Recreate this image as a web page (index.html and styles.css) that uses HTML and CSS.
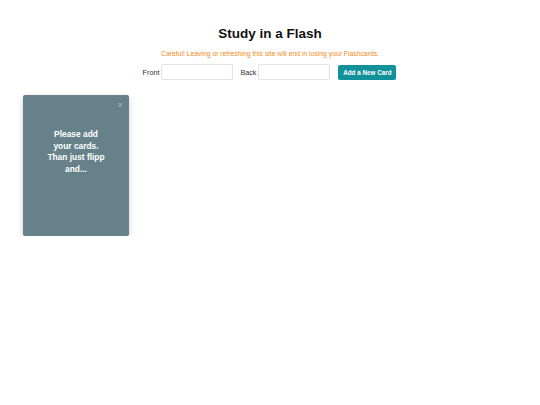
FILE: index.html
```html
<!DOCTYPE html>
<html>
<head>
<meta charset="utf-8">
<link rel="stylesheet" href="styles.css">
</head>
<body>
<header class="header">
  <h1 class="title">Study in a Flash</h1>
  <p class="warning">Careful! Leaving or refreshing this site will end in losing your Flashcards.</p>
  <form class="add-form">
    <label class="field-label">Front</label>
    <input class="field" type="text">
    <label class="field-label back-label">Back</label>
    <input class="field" type="text">
    <button class="add-btn" type="button">Add a New Card</button>
  </form>
</header>
<main class="cards">
  <div class="card">
    <span class="close">x</span>
    <p class="card-text">Please add your cards. Than just flipp and...</p>
  </div>
</main>
</body>
</html>
```

FILE: styles.css
```css
html, body {
  margin: 0;
  padding: 0;
  background: #fff;
  font-family: "Liberation Sans", Arial, sans-serif;
}
.header {
  display: flex;
  flex-direction: column;
  align-items: center;
  padding-top: 25px;
}
.title {
  margin: 0;
  font-size: 13.5px;
  line-height: 18px;
  font-weight: bold;
  color: #111;
}
.warning {
  margin: 6px 0 0;
  font-size: 6.8px;
  line-height: 9px;
  color: #f28a1c;
}
.add-form {
  display: flex;
  align-items: center;
  margin-top: 6px;
  margin-right: 1px;
}
.field-label {
  font-size: 7.2px;
  color: #333;
  margin-right: 2px;
}
.back-label {
  margin-left: 7px;
}
.field {
  width: 72px;
  height: 16px;
  box-sizing: border-box;
  border: 1px solid #e2e2e2;
  border-radius: 2px;
  padding: 0 3px;
  font-size: 7px;
  outline: none;
}
.add-btn {
  margin-left: 8px;
  width: 58px;
  height: 15px;
  box-sizing: border-box;
  border: none;
  border-radius: 2px;
  background: #11929a;
  color: #fff;
  font-family: "Liberation Sans", Arial, sans-serif;
  font-size: 6.3px;
  font-weight: bold;
  padding: 0;
}
.cards {
  display: flex;
  padding: 15px 0 0 23px;
}
.card {
  position: relative;
  width: 106px;
  height: 141px;
  box-sizing: border-box;
  background: #67818b;
  border-radius: 2px;
  box-shadow: 0 2px 6px rgba(0, 0, 0, 0.18);
  padding: 34px 22px 0;
}
.close {
  position: absolute;
  top: 5px;
  right: 7px;
  font-size: 7.5px;
  color: #b9c5ca;
}
.card-text {
  margin: 0;
  text-align: center;
  color: #fff;
  font-weight: bold;
  font-size: 8.4px;
  line-height: 11.7px;
}
```
